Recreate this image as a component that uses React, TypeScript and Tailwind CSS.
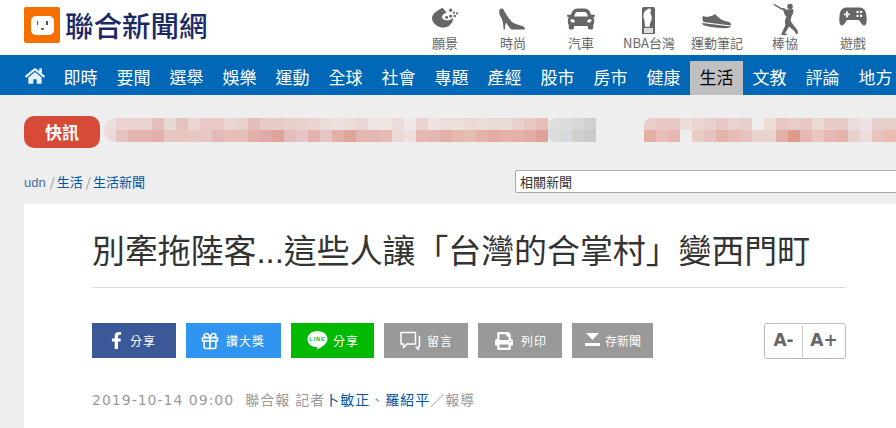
import * as React from "react";
import { Gift } from "lucide-react";
import { FaCar, FaFacebookF, FaHome, FaPrint } from "react-icons/fa";

const cjk = "font-['Noto_Sans_CJK_TC','Liberation_Sans',sans-serif]";

const navItems = ["即時", "要聞", "選舉", "娛樂", "運動", "全球", "社會", "專題", "產經", "股市", "房市", "健康", "生活", "文教", "評論", "地方"];

// pixelated ticker, one colour per 12px cell
const tickerA = [
  ["#ebdfdd", "#e9d2cf", "#e9d2cf", "#e9d2cf", "#e5bfbb", "#e9d9d6", "#e5c4c0", "#ead5d2", "#e8c9c6", "#e8c9c6", "#ead6d3", "#e8d0cc", "#e4bcb9", "#e9cac7", "#e8ccca", "#e8cfc9", "#e8d2cc", "#ebd3d1", "#ecdcda", "#ecdfde", "#eadcdb", "#e9d5d3", "#eee5e3", "#eee5e3", "#ecdcdb", "#eee8e7", "#e9d3d3", "#eee3e2", "#ecdedb", "#eddedb", "#ebd9d5", "#ebdcd9", "#eadad6", "#eadad6", "#e8d0ce", "#e8c8c2", "#e6bfb9"],
  ["#ebdad8", "#e5c3c1", "#e4b5ae", "#e4b5ae", "#e3b0ac", "#e8c7c1", "#e7c6c0", "#e7c8c3", "#e8c7c3", "#e3b9b7", "#e6bdb7", "#e6bdb7", "#e3b1ab", "#dfaaa7", "#e0a49c", "#e4bcbc", "#e8c5c4", "#e3b4ae", "#e8c5c2", "#e3b0a9", "#e0a599", "#e3b6b0", "#e3b6b0", "#e5bbb4", "#e9d9d7", "#ecdfdd", "#e4b8b3", "#e4b8b1", "#e3afa9", "#e6b8ae", "#e7bcb2", "#e5b2aa", "#e3aba5", "#e5b2a9", "#e5b0a9", "#e3aba5", "#e0a09c"],
];
const tickerGrey = [
  ["#e0dfde", "#dddddb", "#d7d7d5", "#cfd0d0"],
  ["#dcdcdb", "#d6dadd", "#cfcfcd", "#c8cacb"],
];
const tickerB = [
  ["#e8cdca", "#e8c8c5", "#e8c8c5", "#ecdcda", "#ebd5d2", "#e9cfcd", "#e8c8c5", "#e9d2cf", "#e8cfcc", "#ededed", "#ecdcd4", "#e8c6c3", "#e9cdc9", "#e9c7c5", "#ebd9d4", "#e9cbc8", "#e9cbc8", "#ecdcdc", "#eee2e2", "#e9cfca", "#e9cfca"],
  ["#e3afa3", "#e8bfbb", "#e5b6b1", "#ededed", "#e9cdc5", "#e8c2bf", "#e4b3aa", "#e6bcb5", "#e8c2bd", "#ead3cf", "#ead3cf", "#e4b0aa", "#df9a8e", "#e6b8b5", "#e9c8c2", "#e6b8b5", "#e5b3a9", "#ead0cd", "#ecdddc", "#e8c3bf", "#e7bdb3"],
];

function Mosaic({ rows, rounded }: { rows: string[][]; rounded?: string }) {
  return (
    <div className={`flex flex-col overflow-hidden ${rounded ?? ""}`}>
      {rows.map((row, i) => (
        <div key={i} className="flex">
          {row.map((c, j) => (
            <div key={j} className="w-3 h-3 shrink-0" style={{ backgroundColor: c }} />
          ))}
        </div>
      ))}
    </div>
  );
}

function FilmIcon() {
  return (
    <svg width="40" height="30" viewBox="-6.5 -2.7 49 37" fill="#666">
      <path d="M15 2l5 6c-3 .5-5.500 3-6 5.500 3 5 9 5 14 1 0 7-6 12-12.500 12S2 21 2 15c0-5 5-9 13-13z" />
      <circle cx="20" cy="14" r="1.800" />
      <circle cx="25" cy="5" r="2" />
      <circle cx="29" cy="8" r="1.300" />
      <circle cx="25" cy="12.500" r="1.800" />
      <circle cx="30" cy="12" r="1.500" />
      <circle cx="33" cy="9" r="1.400" />
    </svg>
  );
}

function HeelIcon() {
  return (
    <svg width="40" height="30" viewBox="0 0 40 30" fill="#666">
      <path d="M7 5c1.500-1 3-.5 3.500.5 2 4 5 8.500 8 12 2.500 2.500 6 3 9 4 3 .8 4.500 1.500 4.500 4H18.500c-2-1.500-4-5-5.500-7-.8 2.500-1 4.500-1 7h-1.500c0-4-.5-8-1.800-11C7 12 5 7.500 7 5z" />
    </svg>
  );
}

function NbaIcon() {
  return (
    <svg width="40" height="30" viewBox="0 0 40 30">
      <rect x="13" y="3" width="13" height="29" rx="1.500" fill="#666" />
      <path d="M19 5c1.800-1 3 0 3 1.700 0 1-.6 1.600-.9 2 1.200 2 2.200 5 1.400 7l-2 5 .5 2h-5l-.5-6c-1.200-3-1.500-5.500-.5-8 .5-1.500 2.200-2.200 4-3.700z" fill="#fff" />
      <rect x="15" y="24" width="9" height="5" fill="#ddd" />
    </svg>
  );
}

function ShoeIcon() {
  return (
    <svg width="40" height="30" viewBox="0 0 40 30" fill="#666">
      <path d="M6 12c1.500 0 2.500 1 3.500 1 3.500-.3 7-1.500 8.500-3 3 3 6 6 10 7 3 .5 5.500 1 6 3l-.2 1.500L6.500 18c-1-2-1.700-4-.5-6z" />
      <path d="M5 19l29 3.500c-.5 1.200-3 1.700-6 1.700-7 0-14-1-20-2.500-2-.5-3-1.500-3-2.700z" />
    </svg>
  );
}

function BatterIcon() {
  return (
    <svg width="40" height="32" viewBox="-4 0 40 32" fill="#666">
      <path d="M5 .8l8 4.500 2.500-.3.500 1.400-3 .5-8.500-4.900z" />
      <circle cx="21" cy="3.500" r="2.800" />
      <path d="M14 6l4 .5 6-.5c1 2 0 5-1.500 7.500-1 2-1 4 0 6l5.500 7c1 1.500 1 3.500.5 4.500h-1.500c-.5-2.500-3.500-5-7-7.500-1.500 2.500-3.500 6-4 7.500h2v1.200h-6c1-3 3-7 4.500-10.500-1-2.500-.5-5.500 1-8-2-2-3-4.500-3.500-8z" />
    </svg>
  );
}

function GamepadIcon() {
  return (
    <svg width="40" height="30" viewBox="-3 1.100 46 34.500">
      <path d="M13 5h14c5 0 8 3 8.500 10 .4 4 .5 9-1.500 10.500-2 1.500-4-1-6-4.500-1-1.500-2-1.500-3-1.500H15c-1 0-2 0-3 1.500-2 3.500-4 6-6 4.500-2-1.500-1.900-6.500-1.500-10.500C5 8 8 5 13 5z" fill="#666" />
      <path d="M12 9.500h2v2.500h2.500v2H14v2.500h-2V14H9.500v-2H12z" fill="#fff" />
      <rect x="24" y="9" width="2.500" height="2.500" fill="#fff" />
      <rect x="28" y="9" width="2.500" height="2.500" fill="#fff" />
      <rect x="24" y="13.500" width="2.500" height="2.500" fill="#fff" />
      <rect x="28" y="13.500" width="2.500" height="2.500" fill="#fff" />
    </svg>
  );
}

const topLinks = [
  { label: "願景", icon: <FilmIcon /> },
  { label: "時尚", icon: <HeelIcon /> },
  { label: "汽車", icon: <FaCar className="w-[28px] h-[28px] text-[#666]" /> },
  { label: "NBA台灣", icon: <NbaIcon /> },
  { label: "運動筆記", icon: <ShoeIcon /> },
  { label: "棒協", icon: <BatterIcon /> },
  { label: "遊戲", icon: <GamepadIcon /> },
];

function CommentIcon() {
  return (
    <svg width="21" height="20" viewBox="0 0 21 20" fill="none" stroke="#fff" strokeWidth="1.500">
      <path d="M1 1.500h14.500v11.500H7L3.500 16.500V13H1z" strokeLinejoin="round" />
      <path d="M18.500 5.500h1V15l-1 .5v3l-3-3" strokeLinejoin="round" />
    </svg>
  );
}

function LineIcon() {
  return (
    <svg width="21" height="20" viewBox="0 0 21 20">
      <path d="M10.500 0c5.800 0 10 3.600 10 8 0 4-4.500 7.500-10 10.500L9.700 16C4 16 .5 12.500.5 8c0-4.400 4.200-8 10-8z" fill="#fff" />
      <text x="10.500" y="10" textAnchor="middle" fill="#00b900" fontSize="5.500" fontWeight="700" fontFamily="Liberation Sans, sans-serif">LINE</text>
    </svg>
  );
}

function SaveIcon() {
  return (
    <svg width="15" height="16" viewBox="0 0 15 16" fill="#fff">
      <path d="M1 0h13L7.500 7z" />
      <rect x="0" y="10" width="15" height="3" />
    </svg>
  );
}

// paddings are per button, icon and label start at fixed spots in the picture
const shareButtons = [
  { label: "分享", icon: <FaFacebookF className="w-[17px] h-[17px] text-white" />, cls: "w-[84px] bg-[#3b5998] pl-[16px] gap-[5px] tracking-[1px]" },
  { label: "讚大獎", icon: <Gift className="w-5 h-5 text-white" strokeWidth={2} />, cls: "w-[95px] bg-[#2f95f0] pl-[14px] gap-[6px] tracking-[1px]" },
  { label: "分享", icon: <LineIcon />, cls: "w-[83px] bg-[#00b900] pl-[16px] gap-[5px] tracking-[1px]" },
  { label: "留言", icon: <CommentIcon />, cls: "w-[84px] bg-[#999] pl-[16px] gap-[6px] tracking-[1px]" },
  { label: "列印", icon: <FaPrint className="w-[18px] h-[18px] text-white" />, cls: "w-[84px] bg-[#999] pl-[17px] gap-2 tracking-[1px]" },
  { label: "存新聞", icon: <SaveIcon />, cls: "w-[81px] bg-[#999] pl-[13px] gap-[5px]" },
];

export default function App() {
  return (
    <div className={`w-[896px] h-[428px] overflow-hidden bg-[#eee] ${cjk}`}>
      <header className="h-[55px] bg-white flex items-start">
        <div className="flex items-center pl-6 pt-[7px] w-[411px] shrink-0">
          <div className="w-9 h-9 rounded-[2px] bg-[#f57000] flex items-center justify-center">
            <div className="relative w-[23px] h-[19px] bg-white rounded-[5px]">
              <span className="absolute left-[6px] top-[5px] w-[1.5px] h-1 bg-[#555]" />
              <span className="absolute right-[6px] top-[5px] w-[1.5px] h-1 bg-[#555]" />
              <span className="absolute left-[10px] top-[12px] w-[3px] h-[2px] rounded-b-full bg-[#555]" />
            </div>
          </div>
          <span className="ml-[5px] text-[28.5px] leading-9 font-medium text-[#1b2a66]">聯合新聞網</span>
        </div>
        <div className="flex">
          {topLinks.map((l) => (
            <div key={l.label} className="w-[68px] flex flex-col items-center">
              <div className="h-[35px] flex items-center justify-center pt-[2px]">{l.icon}</div>
              <span className="text-[13px] leading-[16px] text-[#666] whitespace-nowrap">{l.label}</span>
            </div>
          ))}
        </div>
      </header>

      <nav className="h-10 bg-[#0068b7] flex items-end text-white overflow-hidden">
        <div className="w-[54px] h-10 shrink-0 flex items-center justify-center pl-4 pt-[2px]">
          <FaHome className="w-[20px] h-[20px] text-[#e6f2fb]" />
        </div>
        {navItems.map((item) => (
          <div
            key={item}
            className={
              item === "生活"
                ? "w-[53px] h-[34px] shrink-0 flex items-center justify-center pb-[3px] text-[17px] bg-[#c0c0c0] text-black"
                : "w-[53px] h-[34px] shrink-0 flex items-center justify-center pb-[3px] text-[17px]"
            }
          >
            {item}
          </div>
        ))}
      </nav>

      <div className="h-[53px] pl-6 pt-[21px] flex items-start">
        <div className="w-[76px] h-8 rounded-[10px] bg-[#d84a38] flex items-center justify-center text-white font-bold text-[17px] shrink-0">快訊</div>
        <div className="ml-[4px] mt-[2px] shrink-0">
          <Mosaic rows={tickerA} rounded="rounded-l-xl" />
        </div>
        <div className="shrink-0 mt-[2px]">
          <Mosaic rows={tickerGrey} rounded="rounded-l-lg" />
        </div>
        <div className="ml-[48px] shrink-0 mt-[2px]">
          <Mosaic rows={tickerB} rounded="rounded-tl-lg" />
        </div>
      </div>

      <div className="h-[56px] pl-6 pt-[23px] flex items-start">
        <div className="w-[491px] shrink-0 -mt-[2px] text-[13px] leading-[26px] text-[#0055a2] whitespace-nowrap">
          <span className="text-[#4a6a9a] font-['Liberation_Sans',sans-serif]">udn</span>
          <span className="text-[#999] ml-[4px] mr-[2px]">/</span>
          <span>生活</span>
          <span className="text-[#999] ml-[3px] mr-[2px]">/</span>
          <span>生活新聞</span>
        </div>
        <input
          readOnly
          value="相關新聞"
          className="w-[400px] h-[23px] shrink-0 -mt-px bg-white border border-[#aaa] rounded-[2px] px-1 text-[13px] text-[#333] outline-none"
        />
      </div>

      <main className="ml-6 bg-white h-[224px] pl-[68px] pr-[50px] pt-[26px]">
        <h1 className="text-[32.900px] leading-[44px] text-[#333] font-normal whitespace-nowrap h-[57px] border-b border-[#ddd] box-content [text-spacing-trim:space-all] font-['Liberation_Sans','Noto_Sans_CJK_TC',sans-serif]">
          別牽拖陸客...這些人讓「台灣的合掌村」變西門町
        </h1>
        <div className="mt-[35px] flex items-start">
          <div className="flex gap-[10px]">
            {shareButtons.map((b, i) => (
              <div key={i} className={`${b.cls} h-[35px] flex items-center text-white text-xs`}>
                {b.icon}
                <span>{b.label}</span>
              </div>
            ))}
          </div>
          <div className="ml-auto w-[82px] h-9 border border-[#bbb] rounded-[3px] flex items-center text-[#666] font-bold text-[17px] font-['DejaVu_Sans',sans-serif]">
            <span className="w-[38px] h-8 flex items-center justify-center border-r border-[#ccc]">A-</span>
            <span className="flex-1 h-8 flex items-center justify-center">A+</span>
          </div>
        </div>
        <div className="mt-[31px] text-sm leading-5 tracking-[1px] text-[#999] whitespace-nowrap font-['DejaVu_Sans','Noto_Sans_CJK_TC',sans-serif] [text-spacing-trim:space-all]">
          <span>2019-10-14 09:00</span>
          <span className="ml-[11px]">聯合報</span>
          <span className="ml-[5px]">記者</span>
          <span className="text-[#0055a2]">卜敏正</span>
          <span>、</span>
          <span className="text-[#0055a2]">羅紹平</span>
          <span>／報導</span>
        </div>
      </main>
    </div>
  );
}
